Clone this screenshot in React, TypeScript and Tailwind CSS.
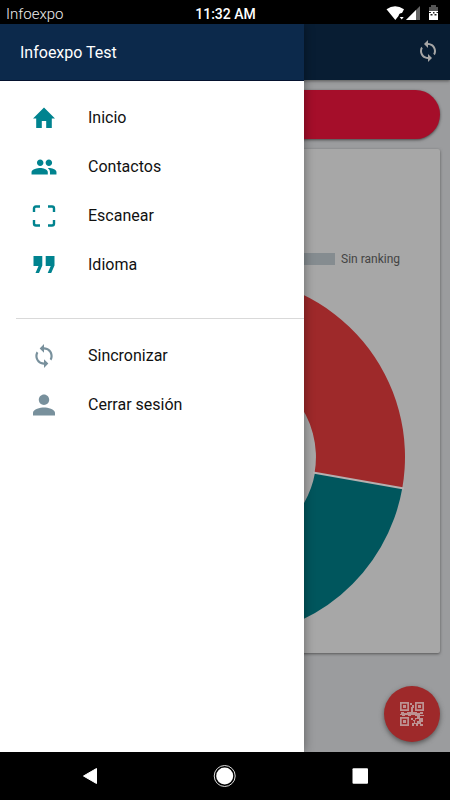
import React from "react";

const paths = {
  home: "M9.800 22v-7h4.400v7h5.600v-9.500h3.200L12 1.500 1 12.500h3.200V22z",
  contacts:
    "M16.5 11c1.66 0 2.99-1.34 2.99-3S18.16 5 16.5 5c-1.66 0-3 1.34-3 3s1.34 3 3 3zM8.500 11c1.66 0 2.99-1.34 2.99-3S10.160 5 8.500 5C6.840 5 5.500 6.340 5.500 8s1.340 3 3 3zm0 2C6.170 13 .5 14.170 .5 16.500V19h15v-2.500c0-2.330-4.670-3.500-7-3.500zm8 0c-.29 0-.62.02-.97.05 1.160.84 1.970 1.970 1.970 3.450V19h6v-2.500c0-2.330-4.670-3.500-7-3.500z",
  quote: "M1.500 3H10.300v9.500l-3.300 7.500H3.500l3-7h-5zM13.700 3h8.800v9.500l-3.300 7.500h-3.500l3-7h-5z",
  sync:
    "M12 4V1L8 5l4 4V6c3.310 0 6 2.690 6 6 0 1.010-.25 1.970-.7 2.800l1.460 1.460C19.540 15.030 20 13.570 20 12c0-4.420-3.580-8-8-8zm0 14c-3.310 0-6-2.690-6-6 0-1.010.25-1.970.7-2.800L5.240 7.740C4.460 8.970 4 10.430 4 12c0 4.420 3.580 8 8 8v3l4-4-4-4v3z",
  person:
    "M12 12c2.900 0 5.200-2.300 5.200-5.200S14.900 1.600 12 1.600 6.800 3.900 6.800 6.800 9.100 12 12 12zm0 2.500c-3.700 0-11 1.750-11 5.250V22.500h22v-2.750C23 16.250 15.700 14.500 12 14.500z",
};

function Icon({ d, className }: { d: string; className: string }) {
  return (
    <svg viewBox="0 0 24 24" className={className} fill="currentColor">
      <path d={d} />
    </svg>
  );
}

function ScanIcon() {
  return (
    <svg viewBox="0 0 24 24" className="size-6" fill="none" stroke="currentColor" strokeWidth="2.4">
      <path d="M2 8V4.500Q2 2.500 4 2.500H8M16 2.500h4q2 0 2 2V8M2 16v3.500q0 2 2 2h4M16 21.500h4q2 0 2-2V16" />
    </svg>
  );
}

function Item({ label, children }: { label: string; children: React.ReactNode }) {
  return (
    <li className="flex h-[49px] items-center pl-8">
      <span className="flex size-6 shrink-0 items-center justify-center">{children}</span>
      <span className="ml-8 pt-px text-base text-[#111]">{label}</span>
    </li>
  );
}

function StatusBar() {
  return (
    <div className="grid h-6 shrink-0 grid-cols-3 items-center bg-black">
      <span className="pl-[6px] pt-[2px] text-[15px] font-light leading-6 text-[#eee]">Infoexpo</span>
      <span className="pl-px pt-[2px] text-center text-[14px] font-medium leading-6 text-white">11:32 AM</span>
      <svg viewBox="0 0 60 24" className="mr-[6px] h-6 w-[60px] justify-self-end">
        <path d="M2.500 8.300Q11 2 20 8.300L18 12q-3 0-3.500 3L11.300 19z" fill="#fff" />
        <path d="M15.700 16h4l-2 2.500z" fill="#fff" />
        <path d="M22 19L36 5V19z" fill="#666" />
        <path d="M22 19L32 9V19z" fill="#fff" />
        <path d="M47 4h5v2h2v4h-9V6h2z" fill="#555" />
        <path d="M45 10h9v9h-9z" fill="#fff" />
        <path d="M45 11h2v1h-2zM46.500 13h2v1.500h-2zM49 11h1.500v1.500H49zM50.500 13h2v1.500h-2zM52.500 11H54v1h-1.500z" fill="#222" />
      </svg>
    </div>
  );
}

function Donut() {
  return (
    <svg viewBox="0 0 430 504" className="absolute inset-0 h-full w-full">
      <path d="M215 128A180 180 0 0 1 392.270 339.260L304.600 323.800A91.500 91.500 0 0 0 215 216.500z" fill="#9e292a" />
      <path d="M392.270 339.260A180 180 0 0 1 215 488V399.500A91.500 91.500 0 0 0 305 323.800z" fill="#00565d" />
      <path d="M303 323.500L394 339.600" stroke="#b5b0b0" strokeWidth="2" />
    </svg>
  );
}

function QrIcon() {
  return (
    <svg viewBox="0 0 24 24" className="size-6" fill="#bd9292">
      <path fillRule="evenodd" d="M0 0h9v9H0zM1.700 1.700v5.600h5.600V1.700zM15 0h9v9h-9zM16.700 1.700v5.600h5.600V1.700zM0 15h9v9H0zM1.700 16.700v5.600h5.600v-5.600z" />
      <path d="M3 3h3v3H3zM18 3h3v3h-3zM3 18h3v3H3zM10 1h2v2h2v3h-1v2h-2V5h1V3h-2zM1 10h3v1h3v-1h4V8h2v2h4v1h3v-1h3v2h-3v1h4v1h-9v-1h-4v1H8v-1H5v1H2v-1H0v-1h1zM11 16h2v2h2v-2h2v-2h3v2h3v4h-2v2h2v2h-3v-2h-2v2h-2v-2h-2v2h-2v-3h2v-2h-1v-1h-2zM15 19v2h2v-2h2v-2h-3z" fillRule="evenodd" />
    </svg>
  );
}

export default function App() {
  return (
    <div className="relative flex h-[800px] w-[450px] flex-col overflow-hidden bg-black font-[Roboto,sans-serif]">
      <StatusBar />
      <main className="relative flex h-[728px] shrink-0 flex-col overflow-hidden bg-[#9b9c9e]">
        <header className="flex h-14 shrink-0 items-center justify-end bg-[#081d33] pb-[2px] pr-[10px] shadow-[0_1px_3px_#555]">
          <Icon d={paths.sync} className="size-6 text-[#a6a6a6]" />
        </header>
        <div className="mx-[10px] mt-[10px] h-[49px] shrink-0 rounded-full bg-[#a50e2a] shadow-[0_1px_3px_#444]" />
        <section className="relative mx-[10px] mt-[10px] h-[504px] shrink-0 rounded-[2px] bg-[#a7a7a7] shadow-[0_1px_3px_#555]">
          <Donut />
          <div className="flex items-center justify-end gap-[6px] pr-10 pt-[102px]">
            <span className="h-3 w-10 bg-[#858c90]" />
            <span className="pt-px text-[12px] leading-[15px] text-[#444]">Sin ranking</span>
          </div>
        </section>
        <button className="absolute bottom-[10px] right-[10px] flex size-14 items-center justify-center rounded-full bg-[#9e292a] shadow-[0_2px_5px_#555]">
          <QrIcon />
        </button>
        <aside className="absolute inset-y-0 left-0 flex w-[304px] flex-col bg-white shadow-[0_0_10px_rgba(0,0,0,0.4)]">
          <div className="flex h-[57px] shrink-0 items-center border-b border-[#04122e] bg-[#0c294b] pl-5 pt-[2px] text-base text-white">
            Infoexpo Test
          </div>
          <ul className="pt-3 text-[#00838f]">
            <Item label="Inicio"><Icon d={paths.home} className="size-6" /></Item>
            <Item label="Contactos"><Icon d={paths.contacts} className="size-[26px] shrink-0" /></Item>
            <Item label="Escanear"><ScanIcon /></Item>
            <Item label="Idioma"><Icon d={paths.quote} className="size-6" /></Item>
          </ul>
          <hr className="ml-4 mt-[29px] border-[#d9d9d9]" />
          <ul className="pt-3 text-[#78909c]">
            <Item label="Sincronizar"><Icon d={paths.sync} className="size-[26px] shrink-0" /></Item>
            <Item label="Cerrar sesión"><Icon d={paths.person} className="size-6" /></Item>
          </ul>
        </aside>
      </main>
      <nav className="h-12 shrink-0 bg-black">
        <svg viewBox="0 0 450 48" className="h-12 w-[450px]" fill="#fff">
          <path d="M83.500 24L96.500 16.500V31.500z" stroke="#fff" strokeLinejoin="round" />
          <circle cx="224.700" cy="24" r="8.500" />
          <circle cx="224.700" cy="24" r="10.500" fill="none" stroke="#ddd" strokeWidth="1" />
          <rect x="352.500" y="16.200" width="15.500" height="15.500" rx="1" />
        </svg>
      </nav>
    </div>
  );
}
